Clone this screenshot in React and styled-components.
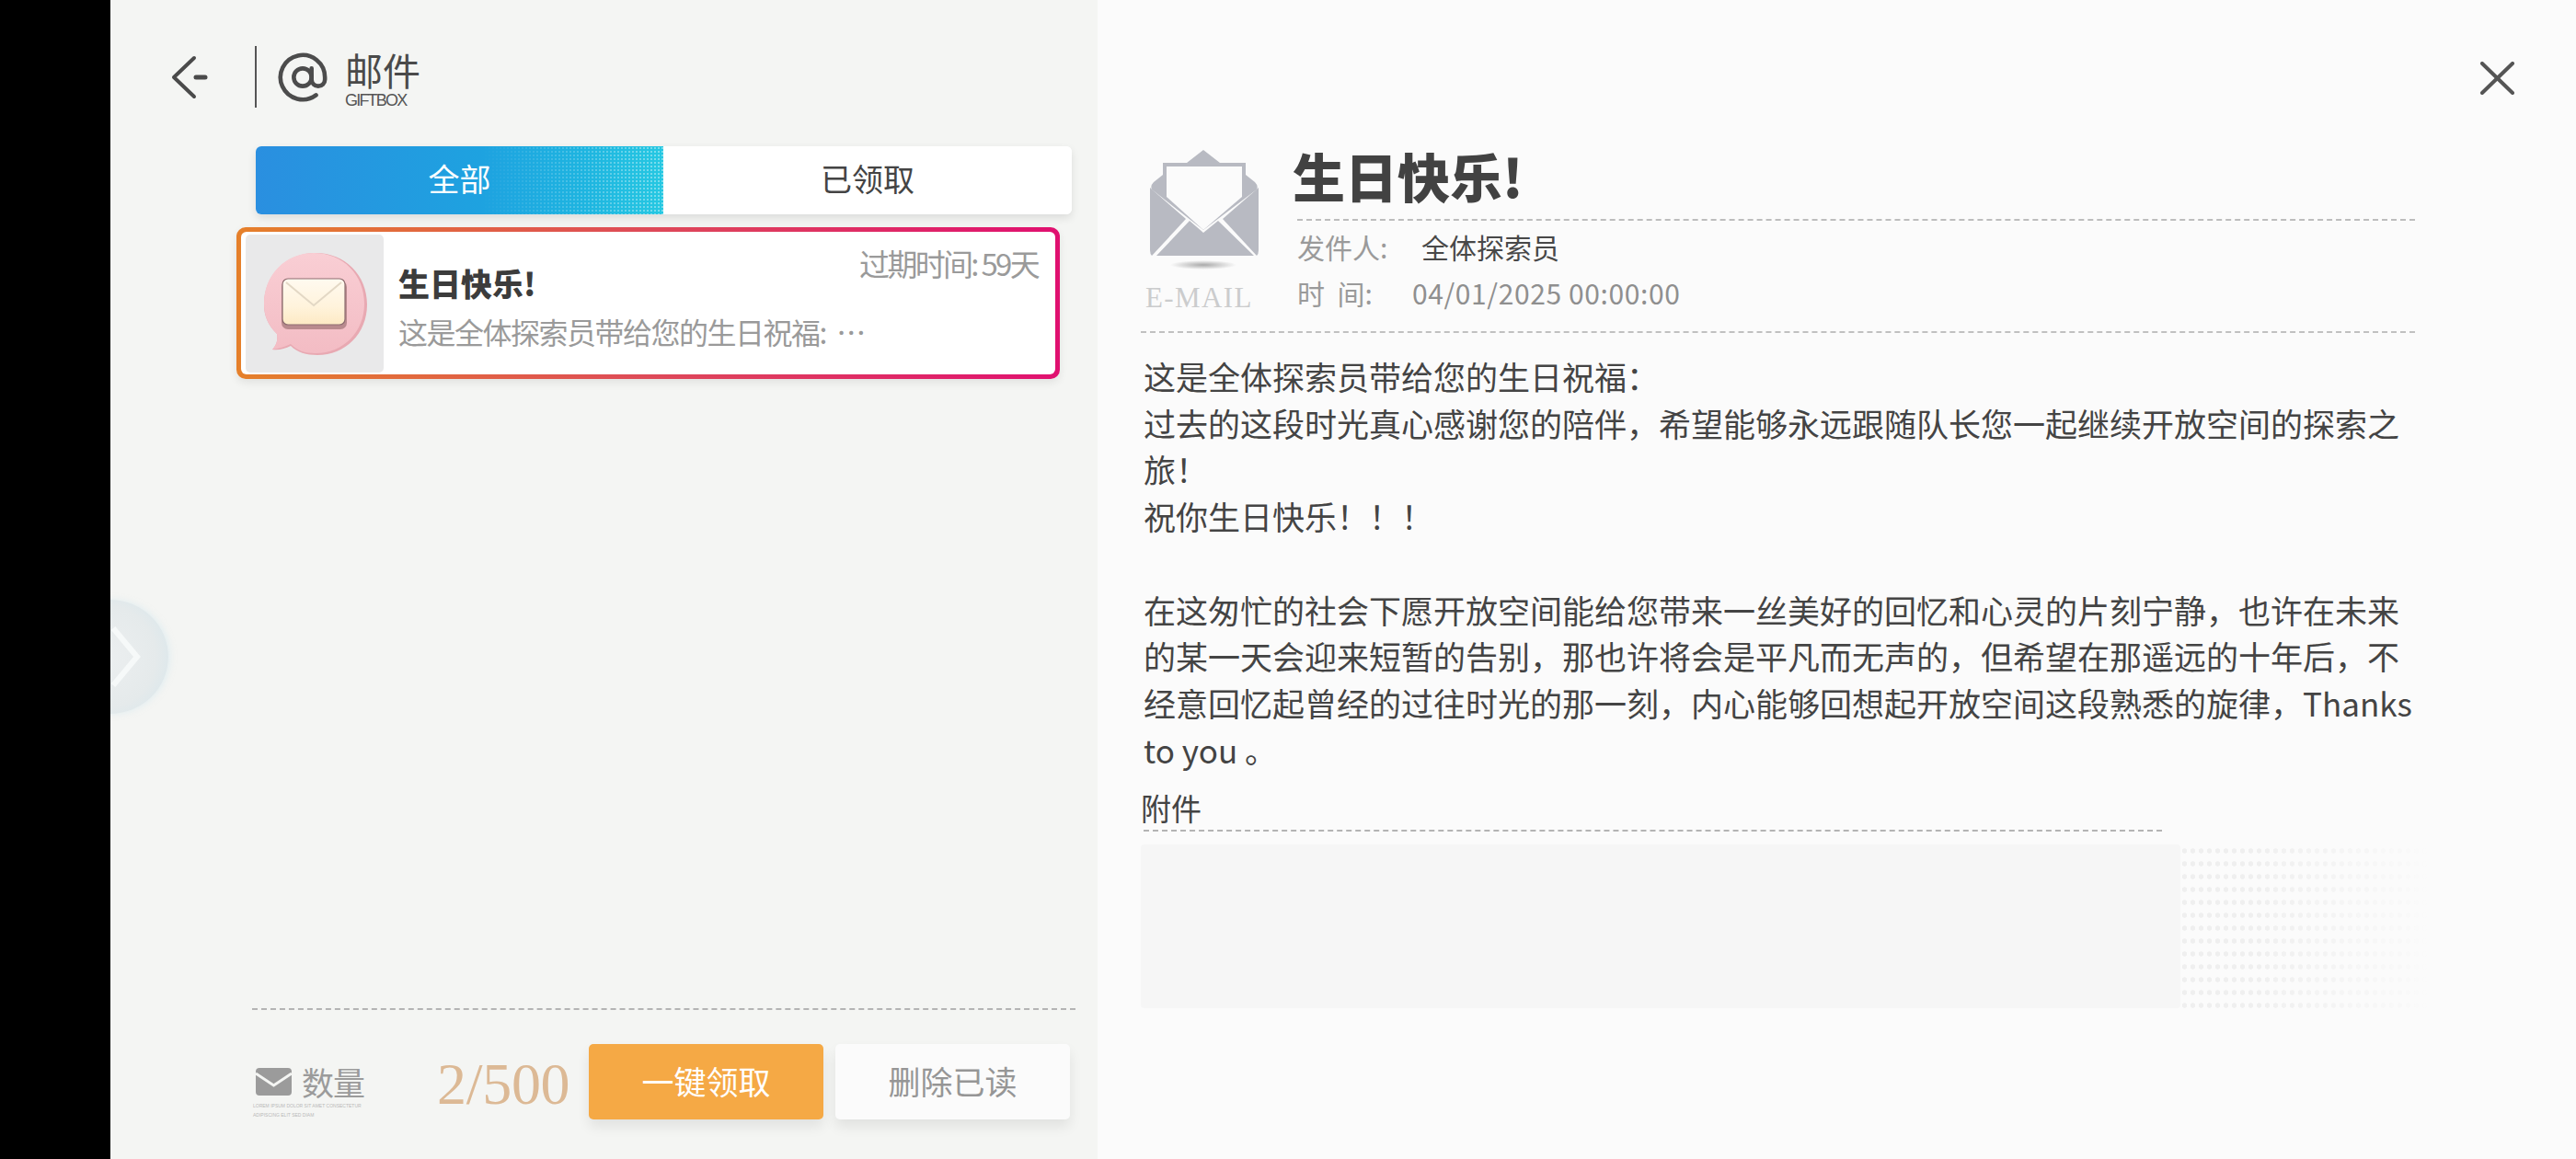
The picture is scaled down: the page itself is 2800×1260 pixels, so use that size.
import styled, { createGlobalStyle } from "styled-components";
import { AtSign } from "lucide-react";

const sans = `"Noto Sans CJK SC", "Noto Sans", sans-serif`;
const serif = `"Liberation Serif", "Noto Sans CJK SC", serif`;

const GlobalStyle = createGlobalStyle`
  html, body {
    margin: 0;
    padding: 0;
    background: #000;
  }
  * {
    box-sizing: border-box;
  }
`;

const Screen = styled.div`
  width: 2800px;
  height: 1260px;
  display: grid;
  grid-template-columns: 120px 1073px 1607px;
  position: relative;
  overflow: hidden;
  font-family: ${sans};
  background: #000;
`;

const BlackBar = styled.div`
  background: #000;
  z-index: 2;
`;

const LeftPanel = styled.section`
  background: #f4f5f3;
  display: flex;
  flex-direction: column;
`;

const RightPanel = styled.section`
  background: #fbfbfb;
  display: flex;
  flex-direction: column;
  padding: 0 0 0 47px;
`;

const Header = styled.header`
  height: 159px;
  padding: 50px 0 0 66px;
  display: flex;
  align-items: flex-start;
  color: #4a4a4a;
`;

const BackButton = styled.div`
  width: 91px;
  height: 67px;
  display: flex;
  align-items: center;
`;

const TitleDivider = styled.div`
  width: 2px;
  height: 67px;
  background: #555;
  margin-right: 21px;
`;

const AtWrap = styled.div`
  width: 58px;
  height: 67px;
  margin-right: 17px;
  display: flex;
  align-items: center;
  justify-content: center;
`;

const TitleBlock = styled.div`
  display: flex;
  flex-direction: column;
`;

const PageTitle = styled.div`
  font-size: 41px;
  line-height: 42px;
  margin-top: 4px;
  color: #4a4a4a;
`;

const PageSub = styled.div`
  margin-top: 4px;
  font-family: "Liberation Sans", sans-serif;
  font-size: 18px;
  line-height: 18px;
  letter-spacing: -1.8px;
  color: #555;
`;

const Tabs = styled.div`
  margin-left: 158px;
  width: 887px;
  height: 74px;
  display: grid;
  grid-template-columns: 443px 444px;
  border-radius: 6px;
  background: #fff;
  box-shadow: 0 4px 10px rgba(0, 0, 0, 0.1);
`;

const Tab = styled.div`
  position: relative;
  display: flex;
  align-items: center;
  justify-content: center;
  padding-bottom: 5px;
  font-size: 34px;
  border-radius: ${(p) => (p.$active ? "6px 0 0 6px" : "0 6px 6px 0")};
  color: ${(p) => (p.$active ? "#fff" : "#444")};
  background: ${(p) =>
    p.$active
      ? "linear-gradient(90deg, #2a8fe0 0%, #1ea2e0 55%, #1eb4e0 80%, #26c8e2 100%)"
      : "#fff"};
`;

const TabDots = styled.div`
  position: absolute;
  top: 0;
  bottom: 0;
  right: 0;
  width: 45%;
  background-image: radial-gradient(circle, rgba(255, 255, 255, 0.4) 1px, transparent 1.4px);
  background-size: 4px 4px;
  mask-image: linear-gradient(90deg, transparent, #000);
`;

const MailCard = styled.div`
  margin: 14px 0 0 137px;
  width: 895px;
  height: 165px;
  padding: 5px;
  border-radius: 10px;
  background: linear-gradient(90deg, #e5802a 0%, #de4a58 50%, #e01070 100%);
  box-shadow: 0 4px 10px rgba(0, 0, 0, 0.08);
`;

const CardInner = styled.div`
  width: 100%;
  height: 100%;
  background: #fff;
  border-radius: 6px;
  padding: 3px 0 0 5px;
  display: flex;
  position: relative;
`;

const Thumb = styled.div`
  width: 150px;
  height: 150px;
  background: #e9e9ea;
  border-radius: 5px;
  flex-shrink: 0;
`;

const CardText = styled.div`
  margin-left: 16px;
  flex: 1;
  display: flex;
  flex-direction: column;
`;

const CardTop = styled.div`
  display: flex;
  justify-content: space-between;
  align-items: flex-start;
  padding-right: 19px;
`;

const CardTitle = styled.div`
  margin-top: 30px;
  font-size: 34px;
  line-height: 46px;
  font-weight: 900;
  color: #3c3c3c;
`;

const Expire = styled.div`
  margin-top: 10px;
  font-size: 33px;
  line-height: 42px;
  letter-spacing: -2.7px;
  color: #9a9a9a;
`;

const CardPreview = styled.div`
  margin-top: 7px;
  font-size: 32px;
  line-height: 44px;
  letter-spacing: -1.5px;
  color: #9a9a9a;
  white-space: nowrap;
`;

const Spacer = styled.div`
  flex: 1;
`;

const DashedLeft = styled.div`
  margin-left: 154px;
  width: 895px;
  border-top: 2px dashed #b4b4b4;
`;

const Footer = styled.footer`
  margin: 37px 0 43px 158px;
  height: 82px;
  display: flex;
  align-items: center;
`;

const CountLabel = styled.div`
  width: 197px;
  padding-top: 20px;
`;

const CountRow = styled.div`
  display: flex;
  align-items: center;
  gap: 11px;
  font-size: 35px;
  line-height: 42px;
  letter-spacing: -1px;
  color: #9b9b9b;
`;

const TinyText = styled.div`
  font-family: "Liberation Sans", sans-serif;
  font-size: 5px;
  line-height: 10px;
  letter-spacing: 0;
  color: #b9b9b9;
  white-space: nowrap;
  margin-left: -3px;
`;

const CountValue = styled.div`
  width: 165px;
  padding-top: 5px;
  font-family: ${serif};
  font-size: 64px;
  line-height: 82px;
  letter-spacing: -0.3px;
  color: #dcb995;
  white-space: nowrap;
`;

const ActionButton = styled.div`
  width: 255px;
  height: 82px;
  margin-right: 13px;
  border-radius: 5px;
  padding-bottom: 4px;
  display: flex;
  align-items: center;
  justify-content: center;
  font-size: 35px;
  color: ${(p) => (p.$primary ? "#fff" : "#969696")};
  background: ${(p) => (p.$primary ? "#f5a945" : "#fbfbfb")};
  box-shadow: 0 8px 14px rgba(0, 0, 0, 0.08);
`;

const CloseRow = styled.div`
  height: 160px;
  padding: 67px 66px 0 0;
  display: flex;
  justify-content: flex-end;
  align-items: flex-start;
`;

const MailHead = styled.div`
  display: flex;
  height: 202px;
  margin-right: 175px;
  border-bottom: 2px dashed #c0c0c0;
`;

const MailBadge = styled.div`
  width: 170px;
  padding-left: 10px;
  display: flex;
  flex-direction: column;
`;

const BadgeText = styled.div`
  margin-top: 13px;
  margin-left: -5px;
  font-family: ${serif};
  font-size: 31px;
  line-height: 32px;
  letter-spacing: 1.4px;
  color: #cbcccd;
`;

const MailMeta = styled.div`
  flex: 1;
  display: flex;
  flex-direction: column;
`;

const MailTitle = styled.div`
  height: 78px;
  margin-left: -5px;
  font-size: 57px;
  line-height: 60px;
  font-weight: 900;
  color: #424242;
`;

const MetaRule = styled.div`
  border-top: 2px dashed #bdbdbd;
  margin-bottom: 3px;
`;

const MetaRow = styled.div`
  height: 50px;
  display: flex;
  align-items: center;
  font-size: 30px;
  color: #8f8f8f;
`;

const MetaLabel = styled.div`
  width: ${(p) => p.$width}px;
  white-space: pre;
  color: #9a9a9a;
`;

const MetaValue = styled.div`
  color: ${(p) => (p.$dark ? "#484848" : "#8f8f8f")};
  letter-spacing: ${(p) => (p.$dark ? 0 : 0.6)}px;
`;

const MailBody = styled.div`
  width: 1390px;
  margin: 22px 0 0 3px;
  font-size: 35px;
  line-height: 50.7px;
  color: #444;
`;

const AttachTitle = styled.div`
  margin-top: 18px;
  font-size: 33px;
  line-height: 40px;
  color: #444;
`;

const AttachRule = styled.div`
  margin: 4px 0 0 3px;
  width: 1107px;
  border-top: 2px dashed #b4b4b4;
`;

const AttachArea = styled.div`
  margin-top: 14px;
  height: 178px;
  width: 1400px;
  display: flex;
`;

const AttachBox = styled.div`
  width: 1130px;
  background: #f6f6f6;
  border-radius: 4px;
`;

const AttachDots = styled.div`
  flex: 1;
  background-image: radial-gradient(circle, #efefef 2.4px, transparent 3px);
  background-size: 9px 14px;
  mask-image: linear-gradient(90deg, #000 30%, transparent);
`;

const Sphere = styled.div`
  position: absolute;
  left: 57px;
  top: 652px;
  width: 126px;
  height: 124px;
  border-radius: 50%;
  background: radial-gradient(circle at 45% 50%, #eceff0 0%, #e5eaeb 60%, #d9e7ec 88%, #ecf4f6 100%);
  box-shadow: 2px 0 6px rgba(210, 232, 240, 0.5);
  display: flex;
  align-items: center;
  justify-content: flex-end;
  padding-right: 30px;
  z-index: 1;
`;

function BackIcon() {
  return (
    <svg width="40" height="48" viewBox="0 0 40 48" fill="none" stroke="#4a4a4a" strokeWidth="4" strokeLinecap="round" strokeLinejoin="round">
      <path d="M25 3 L3 24 L25 45" />
      <path d="M27 24 H37" strokeWidth="5" />
    </svg>
  );
}

function CloseIcon() {
  return (
    <svg width="38" height="36" viewBox="0 0 38 36" fill="none" stroke="#555" strokeWidth="4" strokeLinecap="round">
      <path d="M2 2 L35 34" />
      <path d="M35 2 L2 34" />
    </svg>
  );
}

function BubbleIcon() {
  return (
    <svg width="150" height="150" viewBox="0 0 150 150">
      <defs>
        <linearGradient id="bubbleFill" x1="0" y1="0" x2="0" y2="1">
          <stop offset="0" stopColor="#f9ced4" />
          <stop offset="1" stopColor="#f3bcc4" />
        </linearGradient>
        <linearGradient id="letterFill" x1="0" y1="0" x2="0" y2="1">
          <stop offset="0" stopColor="#fffaf0" />
          <stop offset="0.6" stopColor="#fff3dc" />
          <stop offset="1" stopColor="#fde9c4" />
        </linearGradient>
      </defs>
      <path d="M76 20 C108 20 132 44 132 76 C132 108 108 131 78 131 C66 131 56 128 49 121 C43 124 36 126 29 125 C34 120 35 114 34 108 C24 98 20 88 20 76 C20 44 44 20 76 20 Z" fill="#e8a9b2" />
      <path d="M74 20 C106 20 129 44 129 75 C129 106 106 129 76 129 C64 129 56 126 49 119 C43 122 36 124 29 125 C34 120 35 114 34 108 C24 98 20 88 20 75 C20 44 43 20 74 20 Z" fill="url(#bubbleFill)" />
      <rect x="39" y="50" width="71" height="53" rx="7" fill="#b98a8e" />
      <rect x="40" y="48" width="68" height="50" rx="6" fill="url(#letterFill)" stroke="#8d6d70" strokeWidth="1.2" />
      <path d="M44 52 L74 77 L104 52" fill="none" stroke="#e3d8c5" strokeWidth="2" />
    </svg>
  );
}

function OpenMailIcon() {
  return (
    <svg width="118" height="135" viewBox="0 0 118 135">
      <defs>
        <radialGradient id="mailShadow">
          <stop offset="0" stopColor="#a9a9a9" />
          <stop offset="1" stopColor="#fbfbfb" />
        </radialGradient>
      </defs>
      <path d="M58 3 L76 17 H104 V30 L114 38 Q118 42 116 46 L58 90 L2 46 Q0 42 4 38 L14 30 V17 H40 Z" fill="#b8bac2" />
      <path d="M18 21 H100 V54 L58 90 L18 54 Z" fill="#fbfbfb" />
      <path d="M0 44 L39 78 L2 118 Q0 116 0 112 Z" fill="#b8bac2" />
      <path d="M118 44 L79 78 L116 118 Q118 116 118 112 Z" fill="#b8bac2" />
      <path d="M7 118 L43 80 L58 93 L74 80 L113 118 Z" fill="#b8bac2" />
      <ellipse cx="58" cy="128" rx="36" ry="5" fill="url(#mailShadow)" />
    </svg>
  );
}

function SmallMailIcon() {
  return (
    <svg width="39" height="30" viewBox="0 0 39 30">
      <rect width="39" height="30" rx="4" fill="#9b9b9b" />
      <path d="M0 6 L19.5 19 L39 6" fill="none" stroke="#f4f5f3" strokeWidth="3" />
    </svg>
  );
}

function SphereChevron() {
  return (
    <svg width="32" height="70" viewBox="0 0 32 70" fill="none" stroke="#f6f9f9" strokeWidth="6">
      <path d="M2 4 L28 35 L2 66" />
    </svg>
  );
}

function App() {
  return (
    <>
      <GlobalStyle />
      <Screen>
        <BlackBar />
        <LeftPanel>
          <Header>
            <BackButton>
              <BackIcon />
            </BackButton>
            <TitleDivider />
            <AtWrap>
              <AtSign size={58} strokeWidth={1.9} color="#4c4c4c" />
            </AtWrap>
            <TitleBlock>
              <PageTitle>邮件</PageTitle>
              <PageSub>GIFTBOX</PageSub>
            </TitleBlock>
          </Header>

          <Tabs>
            <Tab $active>
              <TabDots />
              全部
            </Tab>
            <Tab>已领取</Tab>
          </Tabs>

          <MailCard>
            <CardInner>
              <Thumb>
                <BubbleIcon />
              </Thumb>
              <CardText>
                <CardTop>
                  <CardTitle>生日快乐!</CardTitle>
                  <Expire>过期时间: 59天</Expire>
                </CardTop>
                <CardPreview>这是全体探索员带给您的生日祝福:&nbsp;&nbsp;…</CardPreview>
              </CardText>
            </CardInner>
          </MailCard>

          <Spacer />
          <DashedLeft />
          <Footer>
            <CountLabel>
              <CountRow>
                <SmallMailIcon />
                数量
              </CountRow>
              <TinyText>
                LOREM IPSUM DOLOR SIT AMET CONSECTETUR
                <br />
                ADIPISCING ELIT SED DIAM
              </TinyText>
            </CountLabel>
            <CountValue>2/500</CountValue>
            <ActionButton $primary>一键领取</ActionButton>
            <ActionButton>删除已读</ActionButton>
          </Footer>
        </LeftPanel>

        <RightPanel>
          <CloseRow>
            <CloseIcon />
          </CloseRow>
          <MailHead>
            <MailBadge>
              <OpenMailIcon />
              <BadgeText>E-MAIL</BadgeText>
            </MailBadge>
            <MailMeta>
              <MailTitle>生日快乐!</MailTitle>
              <MetaRule />
              <MetaRow>
                <MetaLabel $width={135}>发件人:</MetaLabel>
                <MetaValue $dark>全体探索员</MetaValue>
              </MetaRow>
              <MetaRow>
                <MetaLabel $width={125}>{"时  间:"}</MetaLabel>
                <MetaValue>04/01/2025 00:00:00</MetaValue>
              </MetaRow>
            </MailMeta>
          </MailHead>

          <MailBody>
            这是全体探索员带给您的生日祝福：
            <br />
            过去的这段时光真心感谢您的陪伴，希望能够永远跟随队长您一起继续开放空间的探索之旅！
            <br />
            祝你生日快乐！！！
            <br />
            <br />
            在这匆忙的社会下愿开放空间能给您带来一丝美好的回忆和心灵的片刻宁静，也许在未来的某一天会迎来短暂的告别，那也许将会是平凡而无声的，但希望在那遥远的十年后，不经意回忆起曾经的过往时光的那一刻，内心能够回想起开放空间这段熟悉的旋律，Thanks to you 。
          </MailBody>

          <AttachTitle>附件</AttachTitle>
          <AttachRule />
          <AttachArea>
            <AttachBox />
            <AttachDots />
          </AttachArea>
        </RightPanel>

        <Sphere>
          <SphereChevron />
        </Sphere>
      </Screen>
    </>
  );
}

export default App;
